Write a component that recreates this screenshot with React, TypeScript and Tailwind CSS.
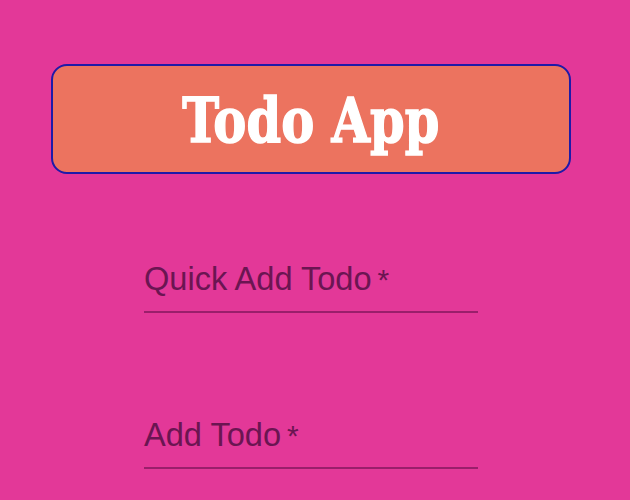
import React from "react";

function Field({ label, gapTop }: { label: string; gapTop: string }) {
  return (
    <div className={`ml-[144px] w-[334px] ${gapTop}`}>
      <div className="flex items-baseline text-[#6b1552] mb-[13px]" style={{ fontFamily: '"Liberation Sans", Arial, sans-serif' }}>
        <span className="text-[32.6px] leading-[36px]">{label}</span>
        <span className="ml-[6px] text-[30px] leading-[36px]">*</span>
      </div>
      <div className="h-[2px] bg-[#9a1f6b]" />
    </div>
  );
}

export default function App() {
  return (
    <div className="w-[630px] h-[500px] bg-[#e33898] overflow-hidden pt-[64px]">
      <div className="ml-[51px] w-[520px] h-[110px] rounded-[16px] border-2 border-[#1e1aa8] bg-[#ec735f] flex items-center justify-center">
        <span
          className="text-white font-bold text-[62px] leading-none inline-block scale-x-[0.8] mt-[4px] [-webkit-text-stroke:1.5px_white]"
          style={{ fontFamily: '"DejaVu Serif", serif' }}
        >
          Todo App
        </span>
      </div>
      <Field label="Quick Add Todo" gapTop="mt-[87px]" />
      <Field label="Add Todo" gapTop="mt-[104px]" />
    </div>
  );
}
